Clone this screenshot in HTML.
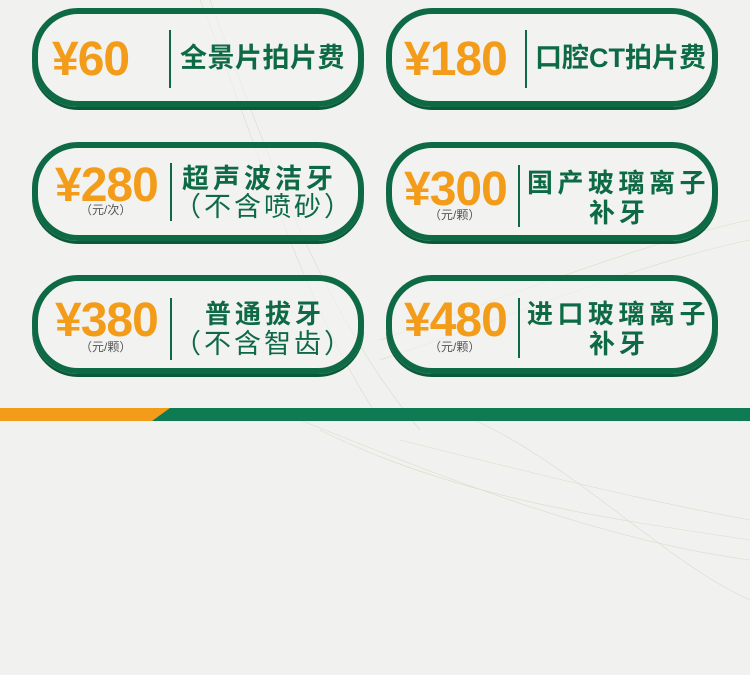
<!DOCTYPE html>
<html><head><meta charset="utf-8"><style>
body{margin:0;width:750px;height:675px;background:#f1f1ef;position:relative;overflow:hidden;font-family:"Liberation Sans","Noto Sans CJK SC",sans-serif}
.pill{position:absolute;width:320px;height:87px;border:6px solid #0d6a45;border-radius:46px;box-shadow:0 3px 0 #0a5a3a;background:rgba(244,244,242,.6)}
.t{position:absolute;white-space:nowrap;line-height:1}
.p{color:#f39c1a;font-weight:bold;font-size:48px;letter-spacing:-1px}
.u{color:#555;font-size:12px}
.g{color:#0d6a45;font-weight:bold;font-size:26px}
.d{position:absolute;width:2px;background:#0d6a45}
</style></head><body>
<svg width="750" height="675" style="position:absolute;left:0;top:0" fill="none" stroke="#c9d9b4" stroke-width="0.6" opacity="0.7">
<path d="M200 0 C260 150 300 300 380 420"/><path d="M210 0 C270 160 320 310 420 430"/>
<path d="M380 340 C500 300 650 240 750 220"/><path d="M380 360 C500 320 650 260 750 240"/>
<path d="M300 420 C450 480 600 540 750 560"/><path d="M320 430 C460 500 620 520 750 540"/>
<path d="M400 440 C520 470 640 500 750 520"/><path d="M450 410 C560 450 660 560 750 600"/>
</svg>
<div class="pill" style="left:32px;top:8px"></div>
<div class="pill" style="left:386px;top:8px"></div>
<div class="pill" style="left:32px;top:142px"></div>
<div class="pill" style="left:386px;top:142px"></div>
<div class="pill" style="left:32px;top:275px"></div>
<div class="pill" style="left:386px;top:275px"></div>

<div class="t p" style="left:52px;top:36px">¥60</div>
<div class="d" style="left:169px;top:30px;height:58px"></div>
<div class="t g" style="left:180px;top:45px;font-size:27px;letter-spacing:0.5px">全景片拍片费</div>

<div class="t p" style="left:404px;top:36px">¥180</div>
<div class="d" style="left:525px;top:30px;height:58px"></div>
<div class="t g" style="left:535px;top:45px;font-size:27px">口腔CT拍片费</div>

<div class="t p" style="left:55px;top:162px">¥280</div>
<div class="t u" style="left:80px;top:204px">（元/次）</div>
<div class="d" style="left:170px;top:163px;height:58px"></div>
<div class="t g" style="left:182px;top:166px;font-size:27px;letter-spacing:4px">超声波洁牙</div>
<div class="t g" style="left:174px;top:194px;font-size:27px;font-weight:normal;letter-spacing:3px">（不含喷砂）</div>

<div class="t p" style="left:404px;top:166px">¥300</div>
<div class="t u" style="left:429px;top:209px">（元/颗）</div>
<div class="d" style="left:518px;top:165px;height:62px"></div>
<div class="t g" style="left:527px;top:170px;letter-spacing:4.5px">国产玻璃离子</div>
<div class="t g" style="left:589px;top:200px;letter-spacing:4px">补牙</div>

<div class="t p" style="left:55px;top:297px">¥380</div>
<div class="t u" style="left:80px;top:341px">（元/颗）</div>
<div class="d" style="left:170px;top:298px;height:62px"></div>
<div class="t g" style="left:205px;top:301px;letter-spacing:4px">普通拔牙</div>
<div class="t g" style="left:174px;top:331px;font-size:27px;font-weight:normal;letter-spacing:3px">（不含智齿）</div>

<div class="t p" style="left:404px;top:297px">¥480</div>
<div class="t u" style="left:429px;top:341px">（元/颗）</div>
<div class="d" style="left:518px;top:298px;height:60px"></div>
<div class="t g" style="left:527px;top:301px;letter-spacing:4.5px">进口玻璃离子</div>
<div class="t g" style="left:589px;top:331px;letter-spacing:4px">补牙</div>

<svg width="750" height="13" style="position:absolute;left:0;top:408px">
<rect width="750" height="13" fill="#0f7b52"/>
<polygon points="0,0 170,0 152,13 0,13" fill="#f39c1a"/>
</svg>
</body></html>
